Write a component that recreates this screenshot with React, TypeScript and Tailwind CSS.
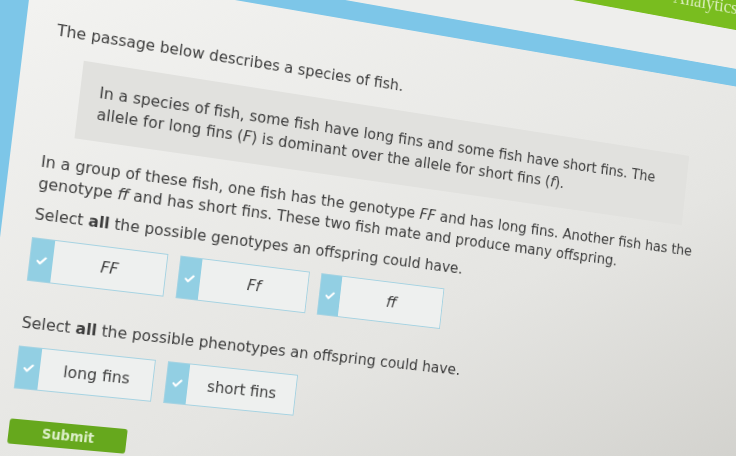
function Check() {
  return (
    <svg width="11" height="9" viewBox="0 0 11 9" fill="none">
      <path
        d="M1.5 5 L4.2 7.3 L9.6 1.6"
        stroke="#ffffff"
        strokeWidth="2.2"
        strokeLinecap="round"
        strokeLinejoin="round"
      />
    </svg>
  );
}

function Tile({ label, italic }: { label: string; italic?: boolean }) {
  return (
    <div className="flex w-[143px] border border-[#a6d3e2] bg-[#eef0ef]">
      <div className="flex w-[23px] items-center justify-center bg-[#92cfe3]">
        <Check />
      </div>
      <div
        className={
          "flex flex-1 items-center justify-center text-[#404040] " +
          (italic ? "italic" : "")
        }
      >
        {label}
      </div>
    </div>
  );
}

export default function App() {
  return (
    <div className="h-[456px] w-[736px] overflow-hidden bg-[#7dc6e8] font-['DejaVu_Sans',sans-serif]">
      {/* the photo is taken at an angle, so the page is tilted as a whole */}
      <div className="flex h-[720px] w-[1150px] origin-[150px_420px] flex-col bg-[#7dc6e8] [transform:translate(-118px,-183px)_perspective(1000px)_rotateY(10deg)_rotate(7deg)]">
        {/* top bar */}
        <div className="flex h-[86px] items-end bg-[#79bd1f] pb-[14px] pl-[846px]">
          <span className="font-['Liberation_Serif',serif] text-[22px] leading-[22px] text-[#d9edbb]">
            Analytics
          </span>
        </div>
        <div className="h-[44px] bg-[#eeeeec]" />
        <div className="h-[20px]" />

        <div className="flex flex-1">
          <div className="w-[118px]" />
          <div className="flex-1 bg-linear-to-br from-[#f3f3f1] via-[#e5e5e2] to-[#c6c5c0] pl-[32px] pt-[50px] text-[16.3px] leading-[22px] text-[#3d3d3d]">
            <p>The passage below describes a species of fish.</p>

            <div className="ml-[31px] mt-[15px] w-[707px] bg-[#e1e1de] pb-[16px] pl-[20px] pt-[19px]">
              <p>
                In a species of fish, some fish have long fins and some fish have short fins. The
                <br />
                allele for long fins (<i>F</i>) is dominant over the allele for short fins (<i>f</i>).
              </p>
            </div>

            <p className="mt-[17px]">
              In a group of these fish, one fish has the genotype <i>FF</i> and has long fins. Another fish has the
              <br />
              genotype <i>ff</i> and has short fins. These two fish mate and produce many offspring.
            </p>

            <p className="mt-[9px]">
              Select <b>all</b> the possible genotypes an offspring could have.
            </p>
            <div className="mt-[12px] flex h-[44px] gap-[13px]">
              <Tile label="FF" italic />
              <Tile label="Ff" italic />
              <Tile label="ff" italic />
            </div>

            <p className="mt-[31px]">
              Select <b>all</b> the possible phenotypes an offspring could have.
            </p>
            <div className="mt-[12px] flex h-[43px] gap-[13px]">
              <Tile label="long fins" />
              <Tile label="short fins" />
            </div>

            <div className="mt-[30px] flex h-[25px] w-[122px] items-center justify-center rounded-[3px] bg-[#66a81d] text-[13.5px] font-bold leading-none text-[#dcefc8]">
              Submit
            </div>
          </div>
        </div>
      </div>
    </div>
  );
}
